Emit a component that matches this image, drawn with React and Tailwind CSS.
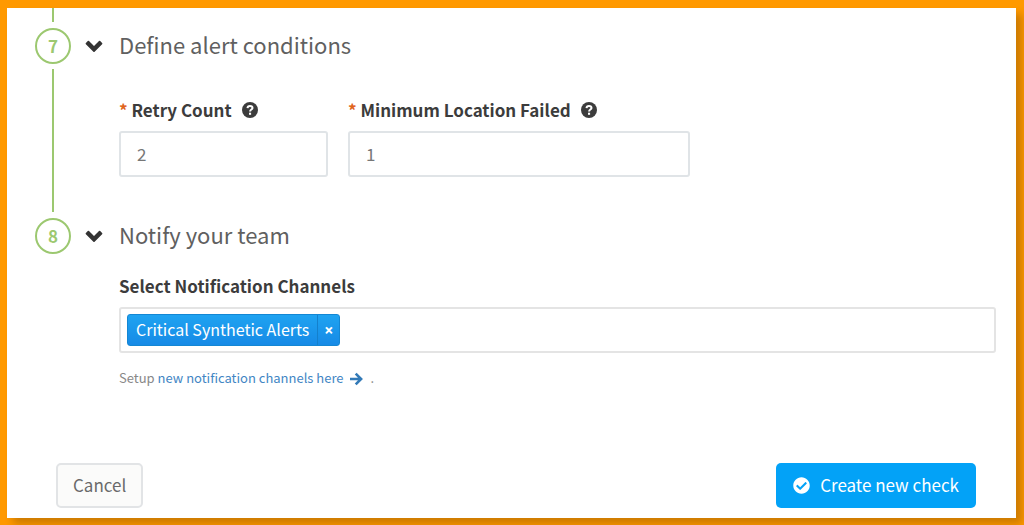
import React, { useState } from "react";
import { FaCheckCircle } from "react-icons/fa";

const Chevron = () => (
    <svg viewBox="0 0 18 18" className="h-[18px] w-[18px] text-[#333]" aria-hidden="true">
        <path
            fill="currentColor"
            d="M9.6 14.700a.9.9 0 0 1-1.200 0L.9 7.200a.8.8 0 0 1 0-1.200l1.900-1.900a.9.9 0 0 1 1.200 0L9 9l5-4.900a.9.9 0 0 1 1.200 0L17.100 6a.8.8 0 0 1 0 1.200z"
        />
    </svg>
);

const QuestionCircle = () => (
    <svg viewBox="0 0 16 16" className="h-4 w-4 shrink-0" aria-hidden="true">
        <circle cx="8" cy="8" r="8" fill="currentColor" />
        <path d="M5.500 6.100C5.600 4.600 6.600 3.900 8 3.900c1.500 0 2.500.8 2.500 2 0 1.700-2.400 1.600-2.400 3.600" fill="none" stroke="#fff" strokeWidth="2" />
        <rect x="7" y="10.700" width="2.100" height="2.100" fill="#fff" />
    </svg>
);

const ArrowRight = () => (
    <svg viewBox="0 0 14 14" className="ml-[5px] inline h-[14px] w-[14px] text-[#337ab7]" aria-hidden="true">
        <path d="M1 7h10.500M6.700 1.600 12.100 7l-5.400 5.400" fill="none" stroke="currentColor" strokeWidth="2.600" />
    </svg>
);

const Step = ({ number, title, first = false, last = false, children }) => {
    const [open, setOpen] = useState(true);

    return (
        <section className="flex gap-[14px]">
            <div className="flex w-9 shrink-0 flex-col items-center">
                {first && <div className="mb-[6px] h-[14px] w-[2px] bg-[#9cc870]" />}
                <div className="flex h-9 w-9 shrink-0 items-center justify-center rounded-full border-2 border-[#9cc870] text-[17px] font-bold text-[#9cc870]">
                    {number}
                </div>
                {!last && <div className="mt-[5px] mb-[6px] w-[2px] flex-1 bg-[#9cc870]" />}
            </div>
            <div className={first ? "min-w-0 flex-1 pt-5" : "min-w-0 flex-1"}>
                <h2>
                    <button
                        type="button"
                        aria-expanded={open}
                        onClick={() => setOpen(!open)}
                        className="flex h-9 items-center gap-4 text-[22px] leading-8 text-[#606060]"
                    >
                        <Chevron />
                        <span className="pb-1">{title}</span>
                    </button>
                </h2>
                {open && <div className="pl-[34px]">{children}</div>}
            </div>
        </section>
    );
};

const NumberField = ({ id, label, defaultValue, className }) => (
    <div className={className}>
        <div className="flex h-5 items-center gap-[10px] text-[#3c3c3c]">
            <label htmlFor={id} className="text-[17px] leading-5 font-bold whitespace-nowrap">
                <span className="text-[#e0641c]">*</span> {label}
            </label>
            <QuestionCircle />
        </div>
        <input
            id={id}
            type="text"
            inputMode="numeric"
            defaultValue={defaultValue}
            className="mt-[11px] h-[46px] w-full rounded-[3px] border-2 border-[#e0e4e7] bg-white px-4 pb-[2px] text-[17px] text-[#777]"
        />
    </div>
);

const App = () => {
    const [channels, setChannels] = useState(["Critical Synthetic Alerts"]);

    return (
        <div className="min-h-screen bg-[#ff9900] pt-2 pr-2 pb-[7px] pl-[7px] font-['Noto_Sans_CJK_SC',sans-serif]">
            <form
                className="bg-white pr-5 pb-[10px] pl-7 shadow-[6px_6px_8px_rgba(0,0,0,0.2)]"
                onSubmit={(e) => e.preventDefault()}
            >
                <Step number={7} title="Define alert conditions" first>
                    <div className="flex gap-5 pt-9 pb-[41px]">
                        <NumberField id="retry" label="Retry Count" defaultValue="2" className="w-[209px]" />
                        <NumberField id="location" label="Minimum Location Failed" defaultValue="1" className="w-[342px]" />
                    </div>
                </Step>

                <Step number={8} title="Notify your team" last>
                    <div className="pt-[22px]">
                        <label htmlFor="channels" className="block text-[17px] leading-5 font-bold text-[#3c3c3c]">
                            Select Notification Channels
                        </label>
                        <div className="mt-[11px] flex h-[46px] items-center rounded-[3px] border-2 border-[#e4e4e4] px-[6px]">
                            {channels.map((channel) => (
                                <span
                                    key={channel}
                                    className="flex h-8 shrink-0 items-stretch rounded-[3px] border border-[#1487d4] bg-linear-to-b from-[#1fa3f1] to-[#178ae6] text-base leading-7 text-white"
                                >
                                    <span className="px-2">{channel}</span>
                                    <button
                                        type="button"
                                        aria-label={`Remove ${channel}`}
                                        onClick={() => setChannels(channels.filter((c) => c !== channel))}
                                        className="w-[22px] border-l border-[#1480cc] font-['Open_Sans',sans-serif] text-base font-bold"
                                    >
                                        ×
                                    </button>
                                </span>
                            ))}
                            <input id="channels" type="text" className="h-8 min-w-0 flex-1 px-2 text-base outline-none" />
                        </div>
                        <p className="mt-[15px] text-[13px] leading-5 text-[#888]">
                            Setup{" "}
                            <a href="#channels" className="text-[#4286c4]">
                                new notification channels here
                                <ArrowRight />
                            </a>
                            <span className="ml-2">.</span>
                        </p>
                    </div>
                </Step>

                <div className="mt-[75px] flex justify-between pr-5 pl-[21px]">
                    <button
                        type="button"
                        className="h-[45px] rounded-[5px] border-2 border-[#e2e4e6] bg-[#fbfbfa] px-[15px] pb-[2px] text-[17px] leading-6 text-[#6a6a6a]"
                    >
                        Cancel
                    </button>
                    <button
                        type="submit"
                        className="flex h-[45px] items-center gap-[10px] rounded-[5px] bg-[#03a2f7] px-[17px] text-[17px] leading-6 text-white"
                    >
                        <FaCheckCircle className="h-[17px] w-[17px]" />
                        <span className="pb-[2px]">Create new check</span>
                    </button>
                </div>
            </form>
        </div>
    );
};

export default App;
